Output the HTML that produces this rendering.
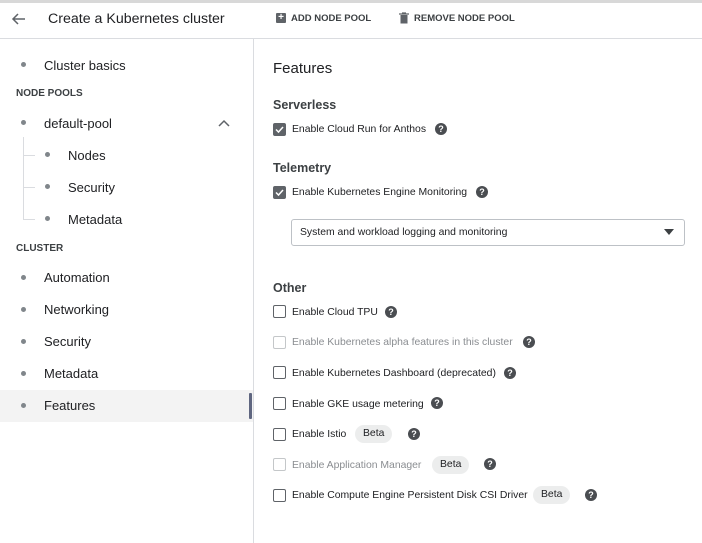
<!DOCTYPE html>
<html><head><style>
*{margin:0;padding:0;box-sizing:border-box}
body{width:702px;height:543px;overflow:hidden;background:#fff;font-family:"Liberation Sans",Arial,sans-serif;color:#202124;position:relative}
.a{position:absolute;white-space:nowrap}
.dot{position:absolute;width:5px;height:5px;border-radius:50%;background:#80868b}
.s{font-size:13px}
.cap{font-size:10px;font-weight:bold;color:#3c4043}
.cb{position:absolute;width:13px;height:13px;border:1.5px solid #5f6368;border-radius:2px}
.cb.d{border-color:#c4c7c9}
.cb.c{background:#5f6368}
.q{position:absolute;width:12px;height:12px;border-radius:50%;background:#4a4d51;color:#fff;font-size:9px;font-weight:bold;text-align:center;line-height:12px}
.t{font-size:10.4px;margin-top:1px}
.g{color:#8a8d91}
.beta{position:absolute;background:#eceded;border-radius:9px;font-size:10.4px;height:18px;line-height:18px;padding:0 8px}
</style></head><body>
<div class="a" style="left:0;top:0;width:702px;height:3px;background:#d8d8d8"></div>
<div class="a" style="left:0;top:38px;width:702px;height:1px;background:#dadce0"></div>
<div class="a" style="left:253px;top:39px;width:1px;height:504px;background:#dadce0"></div>
<svg class="a" style="left:11px;top:11px" width="16" height="16" viewBox="0 0 16 16"><path d="M14 8H2M7 3L2 8l5 5" stroke="#5f6368" stroke-width="1.5" fill="none"/></svg>
<div class="a" style="left:48px;top:11px;font-size:14.2px">Create a Kubernetes cluster</div>
<div class="a" style="left:276px;top:13px;width:10px;height:10px;background:#5f6368;border-radius:1px;color:#fff;font-size:10px;line-height:10px;text-align:center;font-weight:bold">+</div>
<div class="a" style="left:291px;top:13px;color:#3c4043;font-weight:bold;font-size:9.5px">ADD NODE POOL</div>
<svg class="a" style="left:398px;top:12px" width="12" height="12" viewBox="0 0 12 12"><path d="M1 2h10M4 1h4" stroke="#5f6368" stroke-width="1.2"/><rect x="2.5" y="3" width="7" height="8.5" fill="#5f6368"/></svg>
<div class="a" style="left:414px;top:13px;color:#3c4043;font-weight:bold;font-size:9.5px">REMOVE NODE POOL</div>

<div class="dot" style="left:21px;top:62px"></div><div class="a s" style="left:44px;top:58px">Cluster basics</div>
<div class="a cap" style="left:16px;top:88px">NODE POOLS</div>
<div class="dot" style="left:21px;top:120px"></div><div class="a s" style="left:44px;top:116px">default-pool</div>
<svg class="a" style="left:218px;top:119px" width="12" height="8"><path d="M1 7l5-5 5 5" stroke="#5f6368" stroke-width="1.5" fill="none"/></svg>
<div class="a" style="left:23px;top:137px;width:1px;height:82px;background:#dadce0"></div>
<div class="a" style="left:23px;top:155px;width:12px;height:1px;background:#dadce0"></div>
<div class="a" style="left:23px;top:187px;width:12px;height:1px;background:#dadce0"></div>
<div class="a" style="left:23px;top:219px;width:12px;height:1px;background:#dadce0"></div>
<div class="dot" style="left:45px;top:152px"></div><div class="a s" style="left:68px;top:148px">Nodes</div>
<div class="dot" style="left:45px;top:184px"></div><div class="a s" style="left:68px;top:180px">Security</div>
<div class="dot" style="left:45px;top:216px"></div><div class="a s" style="left:68px;top:212px">Metadata</div>
<div class="a cap" style="left:16px;top:243px">CLUSTER</div>
<div class="dot" style="left:21px;top:275px"></div><div class="a s" style="left:44px;top:270px">Automation</div>
<div class="dot" style="left:21px;top:307px"></div><div class="a s" style="left:44px;top:302px">Networking</div>
<div class="dot" style="left:21px;top:339px"></div><div class="a s" style="left:44px;top:334px">Security</div>
<div class="dot" style="left:21px;top:371px"></div><div class="a s" style="left:44px;top:366px">Metadata</div>
<div class="a" style="left:0;top:390px;width:253px;height:32px;background:#f3f3f3"></div>
<div class="a" style="left:249px;top:393px;width:3px;height:26px;background:#5f6680;border-radius:1px"></div>
<div class="dot" style="left:21px;top:403px"></div><div class="a s" style="left:44px;top:398px">Features</div>

<div class="a" style="left:273px;top:60px;font-size:15px">Features</div>
<div class="a" style="left:273px;top:98px;font-size:12.5px;font-weight:bold;color:#3c4043">Serverless</div>
<div class="cb c" style="left:273px;top:123px"></div><svg class="a" style="left:274px;top:124px" width="11" height="11"><path d="M2 5.5l2.5 2.5L9 3" stroke="#fff" stroke-width="1.5" fill="none"/></svg>
<div class="a t" style="left:292px;top:123px">Enable Cloud Run for Anthos</div><div class="q" style="left:435px;top:123px">?</div>
<div class="a" style="left:273px;top:161px;font-size:12.5px;font-weight:bold;color:#3c4043">Telemetry</div>
<div class="cb c" style="left:273px;top:186px"></div><svg class="a" style="left:274px;top:187px" width="11" height="11"><path d="M2 5.5l2.5 2.5L9 3" stroke="#fff" stroke-width="1.5" fill="none"/></svg>
<div class="a t" style="left:292px;top:186px">Enable Kubernetes Engine Monitoring</div><div class="q" style="left:476px;top:186px">?</div>
<div class="a" style="left:291px;top:219px;width:394px;height:27px;border:1px solid #bdc1c6;border-radius:3px"></div>
<div class="a t" style="left:300px;top:226px">System and workload logging and monitoring</div>
<svg class="a" style="left:664px;top:229px" width="10" height="6"><path d="M0 0h10L5 6z" fill="#3c4043"/></svg>
<div class="a" style="left:273px;top:281px;font-size:12.5px;font-weight:bold;color:#3c4043">Other</div>
<div class="cb" style="left:273px;top:305px"></div><div class="a t" style="left:292px;top:306px">Enable Cloud TPU</div><div class="q" style="left:385px;top:306px">?</div>
<div class="cb d" style="left:273px;top:336px"></div><div class="a t g" style="left:292px;top:336px">Enable Kubernetes alpha features in this cluster</div><div class="q" style="left:523px;top:336px">?</div>
<div class="cb" style="left:273px;top:366px"></div><div class="a t" style="left:292px;top:367px">Enable Kubernetes Dashboard (deprecated)</div><div class="q" style="left:504px;top:367px">?</div>
<div class="cb" style="left:273px;top:397px"></div><div class="a t" style="left:292px;top:398px">Enable GKE usage metering</div><div class="q" style="left:431px;top:397px">?</div>
<div class="cb" style="left:273px;top:428px"></div><div class="a t" style="left:292px;top:428px">Enable Istio</div><div class="beta" style="left:355px;top:425px">Beta</div><div class="q" style="left:408px;top:428px">?</div>
<div class="cb d" style="left:273px;top:458px"></div><div class="a t g" style="left:292px;top:459px">Enable Application Manager</div><div class="beta" style="left:432px;top:456px">Beta</div><div class="q" style="left:484px;top:458px">?</div>
<div class="cb" style="left:273px;top:489px"></div><div class="a t" style="left:292px;top:489px">Enable Compute Engine Persistent Disk CSI Driver</div><div class="beta" style="left:533px;top:486px">Beta</div><div class="q" style="left:585px;top:489px">?</div>
</body></html>
